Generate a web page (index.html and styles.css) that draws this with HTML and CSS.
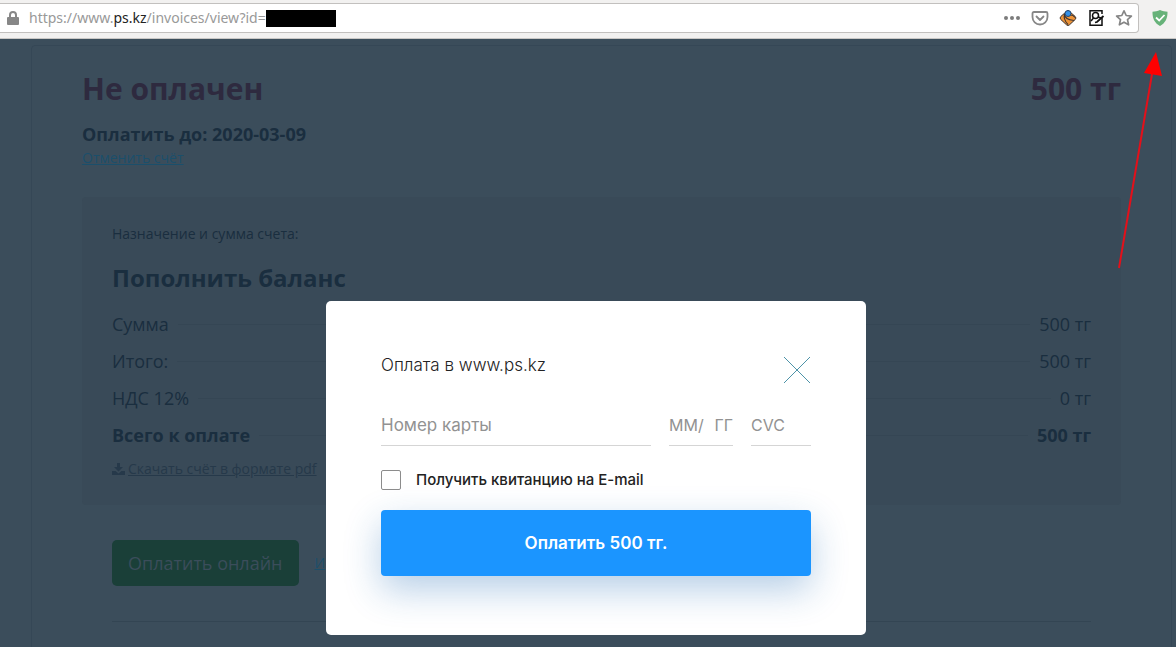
FILE: index.html
```html
<!DOCTYPE html>
<html lang="ru">
<head>
<meta charset="UTF-8">
<meta name="viewport" content="width=device-width, initial-scale=1.0">
<title>Оплата в www.ps.kz</title>
<link rel="stylesheet" href="styles.css">
</head>
<body>

<header class="toolbar">
  <div class="address-bar">
    <svg class="lock" width="12" height="14" viewBox="0 0 12 14"><path d="M3 6.500V4a3 3 0 0 1 6 0v2.500" fill="none" stroke="#878787" stroke-width="2"/><rect y="6" width="12" height="8" rx="1" fill="#878787"/></svg>
    <div class="url" role="textbox">https://www.<span class="domain">ps.kz</span>/invoices/view?id=<span class="redacted"></span></div>
    <div class="actions">
      <button type="button"><svg width="18" height="18" viewBox="0 0 18 18" fill="#7c7c7c"><circle cx="3" cy="9" r="2"/><circle cx="9" cy="9" r="2"/><circle cx="15" cy="9" r="2"/></svg></button>
      <button type="button"><svg width="18" height="18" viewBox="0 0 18 18" fill="none" stroke="#868686" stroke-width="1.800" stroke-linecap="round" stroke-linejoin="round"><path d="M3 3h12q1.500 0 1.500 1.500V8a7.500 7.500 0 0 1-15 0V4.500Q1.500 3 3 3zM5.500 7.500L9 11l3.500-3.500"/></svg></button>
      <button type="button"><svg width="18" height="18" viewBox="0 0 18 18"><path d="M7.500 2.500q1.500-1.500 3 0l5.700 5q1.500 1.500 0 3l-5.700 5.300q-1.500 1.500-3 0L1.800 10.500q-1.500-1.500 0-3z" fill="#ee9336" stroke="#3d3431"/><path d="M5.500 5c0 4 3 6 9.500 6.500M5.500 5c-1 4 0 7 3.500 10.500M11.500 6c2 0 3.500 1 4.500 2.500" fill="none" stroke="#3d3431" stroke-width="1.100"/><circle cx="9" cy="4.500" r="3" fill="#3290e8" stroke="#24466d"/></svg></button>
      <button type="button"><svg width="18" height="18" viewBox="0 0 18 18" fill="none" stroke="#111" stroke-width="1.500"><path d="M15 9v7.200H3V1.800h12V5"/><circle cx="8.500" cy="6.500" r="3"/><path d="M6.500 9l-2.500 3M11 8l3 1"/><path d="M16.500 7l-6.500 6-2 .5" stroke-width="1.800"/></svg></button>
      <button type="button"><svg width="18" height="18" viewBox="0 0 18 18" fill="none" stroke="#868686" stroke-width="1.700" stroke-linejoin="round"><path d="M9 1.800l2.200 4.700 5.200.6-3.900 3.500 1.100 5.200L9 13.200l-4.600 2.600 1.100-5.200L1.600 7.100l5.200-.6z"/></svg></button>
    </div>
  </div>
  <button type="button" class="shield"><svg width="18" height="18" viewBox="0 0 18 18"><path d="M9 1c2.500 1.300 5 1.700 7.500 1.700C16.700 9 14.500 14 9 17 3.500 14 1.300 9 1.500 2.700 4 2.700 6.500 2.300 9 1z" fill="#67b279"/><path d="M5 8.500l3.200 3L13.500 6" fill="none" stroke="#fff" stroke-width="1.800"/></svg></button>
</header>

<main class="page">
  <section class="invoice">
    <div class="invoice-head">
      <h1>Не оплачен</h1>
      <div class="total">500 тг</div>
    </div>
    <p class="due">Оплатить до: 2020-03-09</p>
    <p class="cancel"><a href="#">Отменить счёт</a></p>

    <div class="details">
      <p>Назначение и сумма счета:</p>
      <h2>Пополнить баланс</h2>
      <dl class="rows">
        <div class="row"><dt>Сумма</dt><dd>500 тг</dd></div>
        <div class="row"><dt>Итого:</dt><dd>500 тг</dd></div>
        <div class="row"><dt>НДС 12%</dt><dd>0 тг</dd></div>
        <div class="row row-total"><dt>Всего к оплате</dt><dd>500 тг</dd></div>
      </dl>
      <a href="#" class="download"><svg width="13" height="12" viewBox="0 0 13 12" fill="#26394a"><path d="M5 0h3v4h3L6.500 8.500 2 4h3zM0 8h3.500l3 2.500 3-2.500H13v4H0z"/></svg> Скачать счёт в формате pdf</a>
    </div>

    <div class="pay">
      <button type="button" class="pay-online">Оплатить онлайн</button>
      <a href="#">И</a>
    </div>
    <hr>
  </section>

  <div class="overlay">
    <form class="modal" role="dialog" aria-labelledby="modal-title">
      <div class="modal-head">
        <h3 id="modal-title">Оплата в www.ps.kz</h3>
        <button type="button" class="close"><svg width="28" height="28" viewBox="0 0 28 28" stroke="#4d93a8"><path d="M1 1l26 26M27 1L1 27"/></svg></button>
      </div>
      <div class="fields">
        <input class="field number" type="text" placeholder="Номер карты">
        <div class="field expiry">
          <input type="text" placeholder="ММ"><span>/</span><input type="text" placeholder="ГГ">
        </div>
        <input class="field cvc" type="text" placeholder="CVC">
      </div>
      <label class="receipt" for="receipt"><input type="checkbox" id="receipt">Получить квитанцию на E-mail</label>
      <button type="submit" class="submit">Оплатить 500 тг.</button>
    </form>
  </div>
</main>

<!-- стрелка к иконке расширения -->
<svg class="arrow" width="50" height="220" viewBox="0 0 50 220"><path d="M5 216L38 22" stroke="#e3101a" stroke-width="2"/><path d="M42 0L30 21l18 3z" fill="#f00"/></svg>

</body>
</html>
```

FILE: styles.css
```css
* { box-sizing: border-box; }

body {
  margin: 0;
  height: 100vh;
  display: flex;
  flex-direction: column;
  overflow: hidden;
  background: #3b4d5b;
  color: #1a2e3f;
  font-family: "Open Sans", "Noto Sans", sans-serif;
  font-size: 14px;
  line-height: 20px;
}

h1, h2, h3, p, dl, dd { margin: 0; }

button { font-family: inherit; cursor: pointer; }

svg { display: block; }

/* панель браузера */
.toolbar {
  flex: none;
  display: flex;
  align-items: center;
  height: 39px;
  padding: 0 7px 2px 0;
  background: #f2f1f0;
  border-bottom: 1px solid #c9c7c5;
}

.toolbar button {
  padding: 0;
  border: 0;
  background: none;
}

.address-bar {
  flex: 1;
  display: flex;
  align-items: center;
  height: 30px;
  padding: 0 5px 0 7px;
  background: #fff;
  border: 1px solid #c2c0be;
  border-left: 0;
  border-radius: 0 4px 4px 0;
}

.url {
  flex: 1;
  display: flex;
  align-items: center;
  margin-left: 10px;
  color: #999;
  font-family: "Noto Sans", sans-serif;
  font-size: 14px;
}

.domain { color: #222; }

.redacted {
  width: 70px;
  height: 17px;
  background: #000;
}

.actions {
  display: flex;
  gap: 10px;
}

.shield { margin-left: 12px; }

/* счёт */
.page {
  position: relative;
  flex: 1;
  padding: 6px 4px 0 31px;
  overflow: hidden;
}

.invoice {
  height: 100%;
  min-height: 640px;
  padding: 23px 50px;
  border: 1px solid #354756;
  border-radius: 4px 4px 0 0;
}

.invoice-head {
  display: flex;
  justify-content: space-between;
  color: #2e2a3f;
  font-size: 30px;
  font-weight: 700;
  line-height: 40px;
}

.invoice-head h1 { font-size: 30px; }

.due {
  margin-top: 13px;
  font-size: 18px;
  font-weight: 700;
  line-height: 24px;
}

.cancel { margin-top: 2px; }

.invoice a { color: #1b4f6b; }

.details {
  margin-top: 29px;
  padding: 27px 30px 26px;
  background: #394a58;
  border-radius: 4px;
}

.details h2 {
  margin: 18px 0 12px;
  font-size: 24px;
  line-height: 32px;
}

.row {
  display: flex;
  align-items: center;
  gap: 9px;
  font-size: 18px;
  line-height: 37px;
}

.row::before {
  content: "";
  order: 1;
  flex: 1;
  height: 1px;
  background: #354654;
}

.row dd { order: 2; }

.row-total { font-weight: 700; }

.invoice .download {
  display: flex;
  align-items: center;
  gap: 3px;
  margin-top: 5px;
  color: #26394a;
}

.pay {
  display: flex;
  align-items: center;
  gap: 16px;
  margin: 35px 30px;
}

.pay-online {
  height: 46px;
  padding: 0 16px;
  border: 0;
  border-radius: 5px;
  background: #1a3f38;
  color: #3b4d5b;
  font-size: 18px;
}

hr {
  height: 1px;
  margin: 0 30px;
  border: 0;
  background: #334553;
}

/* окно оплаты */
.overlay {
  position: absolute;
  inset: 0;
  padding: 262px 0 0 16px;
}

.modal {
  width: 540px;
  margin: 0 auto;
  padding: 54px 55px 59px;
  background: #fff;
  border-radius: 5px;
  color: #222;
  font-family: Inter, "Open Sans", sans-serif;
}

.modal-head {
  display: flex;
  justify-content: space-between;
}

.modal-head h3 {
  font-size: 17px;
  font-weight: 300;
  line-height: 20px;
}

.close {
  margin-top: 1px;
  padding: 0;
  border: 0;
  background: none;
}

.fields {
  display: flex;
  gap: 18px;
  margin-top: 21px;
}

.field {
  height: 41px;
  border: 0;
  border-bottom: 1px solid #d5d5d5;
}

.fields input {
  min-width: 0;
  padding: 0;
  background: none;
  color: #222;
  font-family: inherit;
  font-size: 16px;
  outline: none;
}

.fields input::placeholder { color: #929292; }

.fields .number {
  flex: 1;
  font-size: 17px;
}

.expiry {
  display: flex;
  align-items: center;
  width: 64px;
  color: #929292;
  font-size: 16px;
}

.expiry input {
  width: 29px;
  border: 0;
}

.expiry input:last-child {
  flex: 1;
  text-align: right;
}

.cvc { width: 60px; }

.receipt {
  display: flex;
  align-items: center;
  gap: 15px;
  margin: 24px 0 20px;
  font-size: 15px;
  font-weight: 500;
}

.receipt input {
  appearance: none;
  width: 20px;
  height: 20px;
  margin: 0;
  border: 1px solid #8c8c8c;
  border-radius: 2px;
}

.submit {
  width: 100%;
  height: 66px;
  border: 0;
  border-radius: 4px;
  background: #1b95ff;
  box-shadow: 0 14px 36px rgba(30, 105, 180, 0.32);
  color: #fff;
  font-size: 17px;
  font-weight: 600;
}

.arrow {
  position: absolute;
  top: 52px;
  right: 12px;
}
```
